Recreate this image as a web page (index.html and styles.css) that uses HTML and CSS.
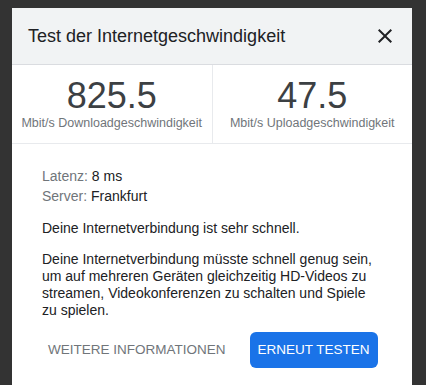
FILE: index.html
```html
<!doctype html>
<html>
<head>
	<meta charset="utf-8">
	<title>Test der Internetgeschwindigkeit</title>
	<link rel="stylesheet" href="styles.css">
</head>
<body>
	<div class="dialog">
		<div class="head">
			<h1>Test der Internetgeschwindigkeit</h1>
			<svg class="close" width="24" height="24" viewBox="0 0 24 24"><path d="M19 6.41L17.59 5 12 10.59 6.41 5 5 6.41 10.59 12 5 17.59 6.41 19 12 13.41 17.59 19 19 17.59 13.41 12z"/></svg>
		</div>
		<div class="stats">
			<div class="stat">
				<div class="num">825.5</div>
				<div class="unit">Mbit/s Downloadgeschwindigkeit</div>
			</div>
			<div class="stat">
				<div class="num">47.5</div>
				<div class="unit">Mbit/s Uploadgeschwindigkeit</div>
			</div>
		</div>
		<div class="body">
			<div class="info">
				<p><span class="key">Latenz:</span> 8 ms</p>
				<p><span class="key">Server:</span> Frankfurt</p>
			</div>
			<p class="msg">Deine Internetverbindung ist sehr schnell.</p>
			<p class="msg">Deine Internetverbindung müsste schnell genug sein, um auf mehreren Geräten gleichzeitig HD-Videos zu streamen, Videokonferenzen zu schalten und Spiele zu spielen.</p>
		</div>
		<div class="actions">
			<a class="btn flat">Weitere Informationen</a>
			<a class="btn blue">Erneut testen</a>
		</div>
	</div>
</body>
</html>
```

FILE: styles.css
```css
* {margin:0; padding:0; box-sizing:border-box;}
body {background:#333; padding:8px 0 0 12px; font-family:"Liberation Sans", Arial, sans-serif; color:#202124; height:385px; overflow:hidden;}

.dialog {width:400px; background:#fff; padding-bottom:40px;}

.head {height:57px; background:#f1f3f4; border-bottom:1px solid #dadce0; display:flex; align-items:center; justify-content:space-between; padding:0 15px 0 16px;}
.head h1 {font-size:18px; font-weight:normal; color:#202124;}
.close {fill:#202124;}

.stats {display:flex; border-bottom:1px solid #e8eaed; height:79px;}
.stat {flex:1; text-align:center; padding-top:12px;}
.stat + .stat {border-left:1px solid #e8eaed;}
.num {font-size:36px; line-height:38px; color:#3c4043;}
.unit {font-size:12.5px; line-height:16px; color:#70757a;}

.body {padding:22px 30px 0 30px; font-size:14px;}
.info p {line-height:20px;}
.key {color:#70757a;}
.msg {line-height:17px; margin-top:14px;}

.actions {display:flex; gap:16px; padding:13px 0 0 28px;}
.btn {display:block; font-size:13.5px; text-transform:uppercase; height:36px; line-height:36px; padding:0 8px; border-radius:6px;}
.btn.flat {color:#70757a;}
.btn.blue {background:#1a73e8; color:#fff;}
```
